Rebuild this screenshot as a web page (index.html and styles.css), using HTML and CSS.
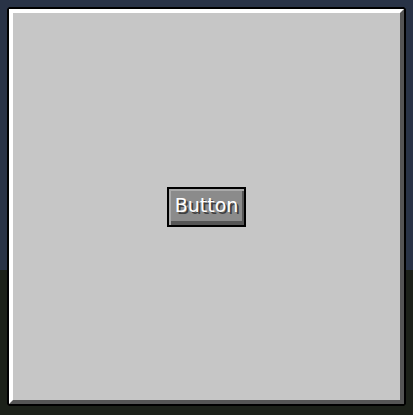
FILE: index.html
```html
<!DOCTYPE html>
<html>
<head>
<meta charset="utf-8">
<link rel="stylesheet" href="styles.css">
</head>
<body>
<div class="stage">
  <div class="panel">
    <div class="frame">
      <button class="mc-button"><span class="label">Button</span></button>
    </div>
  </div>
</div>
</body>
</html>
```
FILE: styles.css
```css
html, body {
  margin: 0;
  padding: 0;
}
body {
  width: 413px;
  height: 415px;
  background: linear-gradient(to bottom, #293346 0px, #293346 270px, #1c2119 270px, #1c2119 100%);
  overflow: hidden;
}
.stage {
  padding: 7px;
}
.panel {
  width: 399px;
  height: 399px;
  box-sizing: border-box;
  background: #000;
  padding: 2px;
  clip-path: polygon(2px 0, calc(100% - 2px) 0, 100% 2px, 100% calc(100% - 2px), calc(100% - 2px) 100%, 2px 100%, 0 calc(100% - 2px), 0 2px);
}
.frame {
  width: 100%;
  height: 100%;
  box-sizing: border-box;
  background: #c6c6c6;
  border-top: 4px solid #ffffff;
  border-left: 4px solid #ffffff;
  border-bottom: 4px solid #555555;
  border-right: 4px solid #555555;
  display: flex;
  align-items: center;
  justify-content: center;
}
.mc-button {
  width: 79px;
  height: 40px;
  box-sizing: border-box;
  margin: 0;
  padding: 0 0 2px 0;
  border: 2px solid #000;
  background: #8b8b8b;
  box-shadow: inset 2px 2px 0 #aaaaaa, inset -2px -4px 0 #565656;
  display: flex;
  align-items: center;
  justify-content: center;
  font-family: "DejaVu Sans", sans-serif;
  font-size: 19px;
  color: #ffffff;
  text-shadow: 2px 2px 0 #3f3f3f;
  line-height: 1;
}
.label {
  display: block;
}
```
